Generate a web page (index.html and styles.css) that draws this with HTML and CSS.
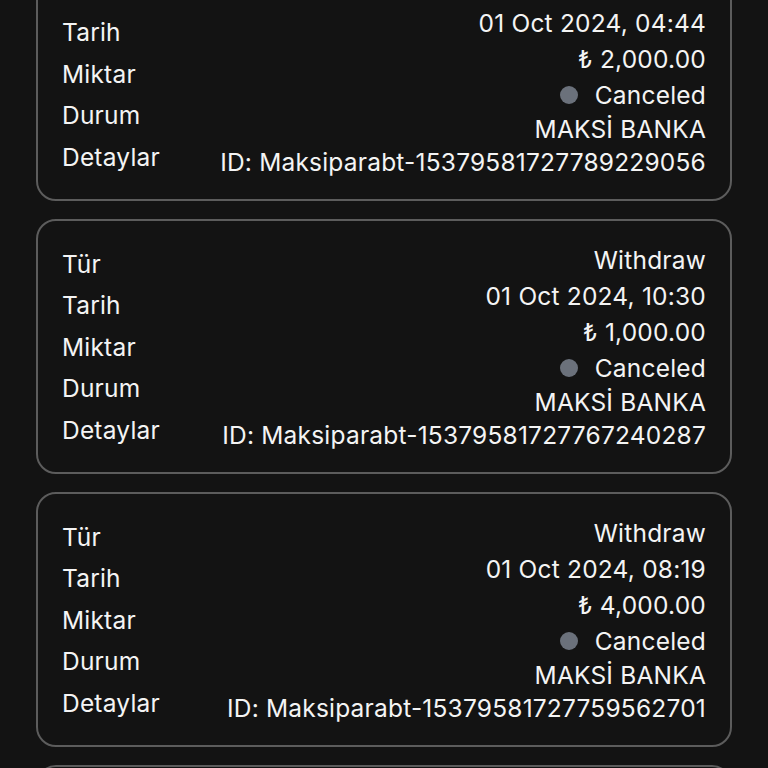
FILE: index.html
```html
<!DOCTYPE html>
<html lang="tr">
<head>
<meta charset="utf-8">
<link rel="stylesheet" href="styles.css">
</head>
<body>
<div class="list">
  <div class="card">
    <div class="labels">
      <div class="label">Tür</div>
      <div class="label">Tarih</div>
      <div class="label">Miktar</div>
      <div class="label">Durum</div>
      <div class="label">Detaylar</div>
    </div>
    <div class="values">
      <div class="value">Withdraw</div>
      <div class="value">01 Oct 2024, 04:44</div>
      <div class="value">₺ 2,000.00</div>
      <div class="value"><span class="dot"></span>Canceled</div>
      <div class="detail">MAKSİ BANKA</div>
      <div class="detail">ID: Maksiparabt-15379581727789229056</div>
    </div>
  </div>
  <div class="card">
    <div class="labels">
      <div class="label">Tür</div>
      <div class="label">Tarih</div>
      <div class="label">Miktar</div>
      <div class="label">Durum</div>
      <div class="label">Detaylar</div>
    </div>
    <div class="values">
      <div class="value">Withdraw</div>
      <div class="value">01 Oct 2024, 10:30</div>
      <div class="value">₺ 1,000.00</div>
      <div class="value"><span class="dot"></span>Canceled</div>
      <div class="detail">MAKSİ BANKA</div>
      <div class="detail">ID: Maksiparabt-15379581727767240287</div>
    </div>
  </div>
  <div class="card">
    <div class="labels">
      <div class="label">Tür</div>
      <div class="label">Tarih</div>
      <div class="label">Miktar</div>
      <div class="label">Durum</div>
      <div class="label">Detaylar</div>
    </div>
    <div class="values">
      <div class="value">Withdraw</div>
      <div class="value">01 Oct 2024, 08:19</div>
      <div class="value">₺ 4,000.00</div>
      <div class="value"><span class="dot"></span>Canceled</div>
      <div class="detail">MAKSİ BANKA</div>
      <div class="detail">ID: Maksiparabt-15379581727759562701</div>
    </div>
  </div>
  <div class="card">
    <div class="labels">
      <div class="label">Tür</div>
      <div class="label">Tarih</div>
      <div class="label">Miktar</div>
      <div class="label">Durum</div>
      <div class="label">Detaylar</div>
    </div>
    <div class="values">
      <div class="value">Withdraw</div>
      <div class="value">01 Oct 2024, 07:12</div>
      <div class="value">₺ 3,000.00</div>
      <div class="value"><span class="dot"></span>Canceled</div>
      <div class="detail">MAKSİ BANKA</div>
      <div class="detail">ID: Maksiparabt-15379581727750123456</div>
    </div>
  </div>
</div>
</body>
</html>
```
FILE: styles.css
```css
html, body {
  margin: 0;
  padding: 0;
  background: #131313;
}
body {
  font-family: Inter, "Noto Sans", "DejaVu Sans", sans-serif;
  font-size: 24.5px;
  letter-spacing: 0.2px;
  color: #f4f4f4;
  overflow: hidden;
  height: 768px;
}
.list {
  display: flex;
  flex-direction: column;
  gap: 18px;
  padding: 0 36px;
  margin-top: -54px;
}
.card {
  border: 2px solid #5c5c5c;
  border-radius: 20px;
  padding: 21px 24px;
  display: flex;
  justify-content: space-between;
}
.labels {
  display: flex;
  flex-direction: column;
  padding-top: 2px;
}
.label {
  line-height: 41.4px;
  height: 41.4px;
}
.values {
  display: flex;
  flex-direction: column;
  align-items: flex-end;
  text-align: right;
}
.value {
  line-height: 36px;
  height: 36px;
  display: flex;
  align-items: center;
}
.detail {
  line-height: 32.5px;
  height: 32.5px;
}
.dot {
  width: 18px;
  height: 18px;
  border-radius: 50%;
  background: #6b717b;
  margin-right: 17px;
}
```
